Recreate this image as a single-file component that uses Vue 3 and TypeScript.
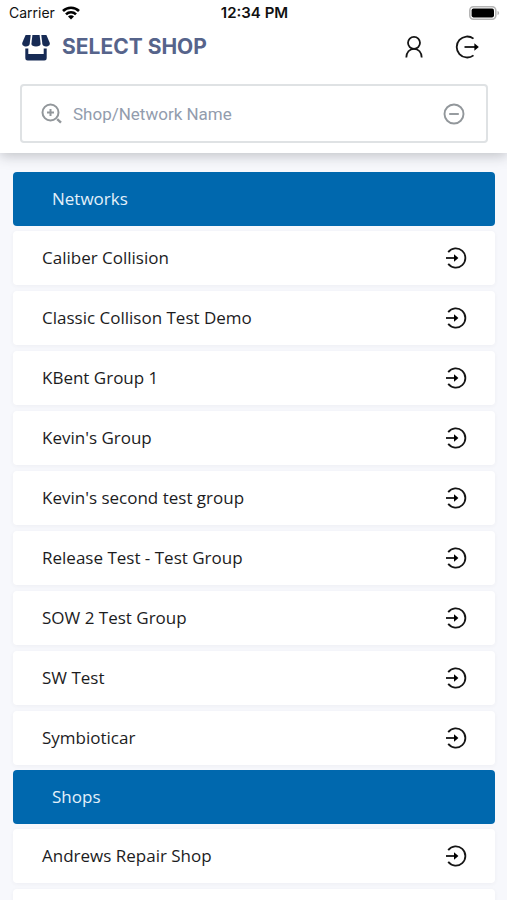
<script setup lang="ts">
import { ref } from 'vue'

interface Section {
  title: string
  items: string[]
}

const query = ref('')

const sections: Section[] = [
  {
    title: 'Networks',
    items: [
      'Caliber Collision',
      'Classic Collison Test Demo',
      'KBent Group 1',
      "Kevin's Group",
      "Kevin's second test group",
      'Release Test - Test Group',
      'SOW 2 Test Group',
      'SW Test',
      'Symbioticar',
    ],
  },
  { title: 'Shops', items: ['Andrews Repair Shop', ''] },
]
</script>

<template>
  <div class="screen">
    <header class="top">
      <div class="status">
        <div class="carrier">
          <span>Carrier</span>
          <svg width="18" height="14" viewBox="0 0 18 14" aria-hidden="true">
            <g fill="none" stroke="#000" stroke-width="2.6">
              <path d="M1 5a11.300 11.300 0 0 1 16 0" />
              <path d="M4 8.300a7 7 0 0 1 10 0" />
            </g>
            <path d="M9 13.600L6 10.600a4.200 4.200 0 0 1 6 0z" />
          </svg>
        </div>
        <span class="time">12:34 PM</span>
        <svg class="battery" width="31" height="14" viewBox="0 0 31 14" aria-hidden="true">
          <rect x=".8" y=".8" width="26" height="12.400" rx="3.600" fill="#fff" stroke="#b5b5b5" stroke-width="1.600" />
          <rect x="2.600" y="2.600" width="22.400" height="8.800" rx="1.800" />
          <path d="M28.500 5v4c1-.3 1.600-1.100 1.600-2s-.6-1.700-1.600-2z" fill="#b5b5b5" />
        </svg>
      </div>

      <div class="bar">
        <svg width="30" height="28" viewBox="0 0 30 28" fill="#172b55" aria-hidden="true">
          <path d="M4.600 2h5.100L8.700 10.800c-.2 1.700-1.700 2.600-3.700 2.600-2.500 0-4.300-1.500-3.700-3.700z" />
          <path d="M11.400 2h7.200l1 8.700c.1 1.700-1.800 2.700-4.600 2.700s-4.700-1-4.600-2.700z" />
          <path d="M25.400 2h-5.100l1 8.800c.2 1.700 1.700 2.600 3.700 2.600 2.500 0 4.300-1.500 3.700-3.700z" />
          <path d="M4.300 15.500h3v5.500h15.400v-5.500h3v9.700a2.300 2.300 0 0 1-2.300 2.300H6.600a2.300 2.300 0 0 1-2.300-2.300z" />
        </svg>
        <h1>SELECT SHOP</h1>
        <button type="button" aria-label="Profile">
          <svg width="24" height="24" viewBox="0 0 24 24" aria-hidden="true">
            <g class="line">
              <circle cx="12" cy="7.800" r="6" />
              <path d="M4.300 22.500c0-5 3.200-8.700 7.700-8.700s7.700 3.700 7.700 8.700" />
            </g>
          </svg>
        </button>
        <button type="button" aria-label="Log out">
          <svg width="24" height="24" viewBox="0 0 24 24" aria-hidden="true">
            <g class="line">
              <path d="M18.500 3.600A10.500 10.500 0 1 0 18.500 20.400" />
              <path d="M9.500 12H22" />
            </g>
            <path d="M19.400 8.200L23.800 12l-4.400 3.800z" />
          </svg>
        </button>
      </div>

      <div class="search">
        <svg width="22" height="22" viewBox="0 0 22 22" aria-hidden="true">
          <g fill="none" stroke="#92979b" stroke-width="2">
            <circle cx="9.500" cy="9.500" r="8" />
            <path d="M9.500 6v7M6 9.500h7" />
            <path d="M16.200 16.200l3.800 3.400" stroke-width="2.400" />
          </g>
        </svg>
        <input v-model="query" type="text" placeholder="Shop/Network Name" aria-label="Shop or network name" />
        <button type="button" aria-label="Clear" @click="query = ''">
          <svg width="22" height="22" viewBox="0 0 22 22" aria-hidden="true">
            <g fill="none" stroke="#92979b" stroke-width="1.900">
              <circle cx="11" cy="11" r="9.500" />
              <path d="M6.200 11h9.600" />
            </g>
          </svg>
        </button>
      </div>
    </header>

    <main>
      <section v-for="section in sections" :key="section.title">
        <h2>{{ section.title }}</h2>
        <ul>
          <li v-for="name in section.items" :key="name">
            <button class="row" type="button">
              <span>{{ name }}</span>
              <svg width="22" height="22" viewBox="0 0 22 22" aria-hidden="true">
                <g class="line">
                  <path d="M3.200 5.100A9.600 9.600 0 1 1 3.200 16.900" />
                  <path d="M1 11h10.500" />
                </g>
                <path d="M9 7.200L13.400 11 9 14.800z" />
              </svg>
            </button>
          </li>
        </ul>
      </section>
    </main>
  </div>
</template>

<style>
body {
  margin: 0;
}
</style>

<style scoped>
.screen {
  display: flex;
  flex-direction: column;
  height: 100vh;
  background: #f7f8fc;
  font-family: 'Open Sans', 'Noto Sans', sans-serif;
  color: #1c1c1e;
}

svg {
  display: block;
  flex: none;
}

button {
  padding: 0;
  border: 0;
  background: none;
  color: inherit;
  font: inherit;
}

.line {
  fill: none;
  stroke: #151515;
  stroke-width: 1.8;
}

.top {
  position: relative;
  flex: none;
  padding-bottom: 10px;
  background: #fff;
  box-shadow: 0 3px 12px rgba(40, 42, 52, 0.26);
}

.status {
  display: grid;
  grid-template-columns: 1fr auto 1fr;
  align-items: center;
  height: 26px;
  padding: 0 7px 0 9px;
  font: 14px/20px Inter, sans-serif;
  color: #111;
}

.carrier {
  display: flex;
  align-items: center;
  gap: 7px;
}

.time {
  font-size: 15px;
  font-weight: 600;
}

.battery {
  justify-self: end;
}

.bar {
  display: flex;
  align-items: center;
  height: 42px;
  padding: 0 28px 0 21px;
}

h1 {
  flex: 1;
  margin: 0 0 0 11px;
  font: 700 21px/28px Inter, sans-serif;
  color: #56648b;
}

.bar button + button {
  margin-left: 29px;
}

.search {
  display: flex;
  align-items: center;
  gap: 10px;
  box-sizing: border-box;
  height: 59px;
  margin: 16px 19px 0 20px;
  padding: 0 21px 0 19px;
  border: 2px solid #dfe2e4;
  border-radius: 4px;
}

.search input {
  flex: 1;
  min-width: 0;
  padding: 0;
  border: 0;
  outline: 0;
  background: none;
  font: 17px/24px Roboto, sans-serif;
  color: #1c1c1e;
}

.search input::placeholder {
  color: #929cad;
  opacity: 1;
}

main {
  flex: 1;
  min-height: 0;
  display: flex;
  flex-direction: column;
  gap: 5px;
  padding: 19px 12px 0 13px;
  overflow-y: auto;
  scrollbar-width: none;
}

h2 {
  margin: 0 0 5px;
  padding: 0 39px;
  border-radius: 4px;
  background: #0068ae;
  font-size: 17px;
  font-weight: 400;
  line-height: 54px;
  color: #e3f0fa;
}

ul {
  display: flex;
  flex-direction: column;
  gap: 6px;
  margin: 0;
  padding: 0;
  list-style: none;
}

.row {
  display: flex;
  align-items: center;
  justify-content: space-between;
  width: 100%;
  height: 54px;
  padding: 0 28px 0 29px;
  border-radius: 4px;
  background: #fff;
  box-shadow: 0 1px 4px rgba(60, 60, 70, 0.05);
  font-size: 17px;
  line-height: 24px;
  text-align: left;
}
</style>
